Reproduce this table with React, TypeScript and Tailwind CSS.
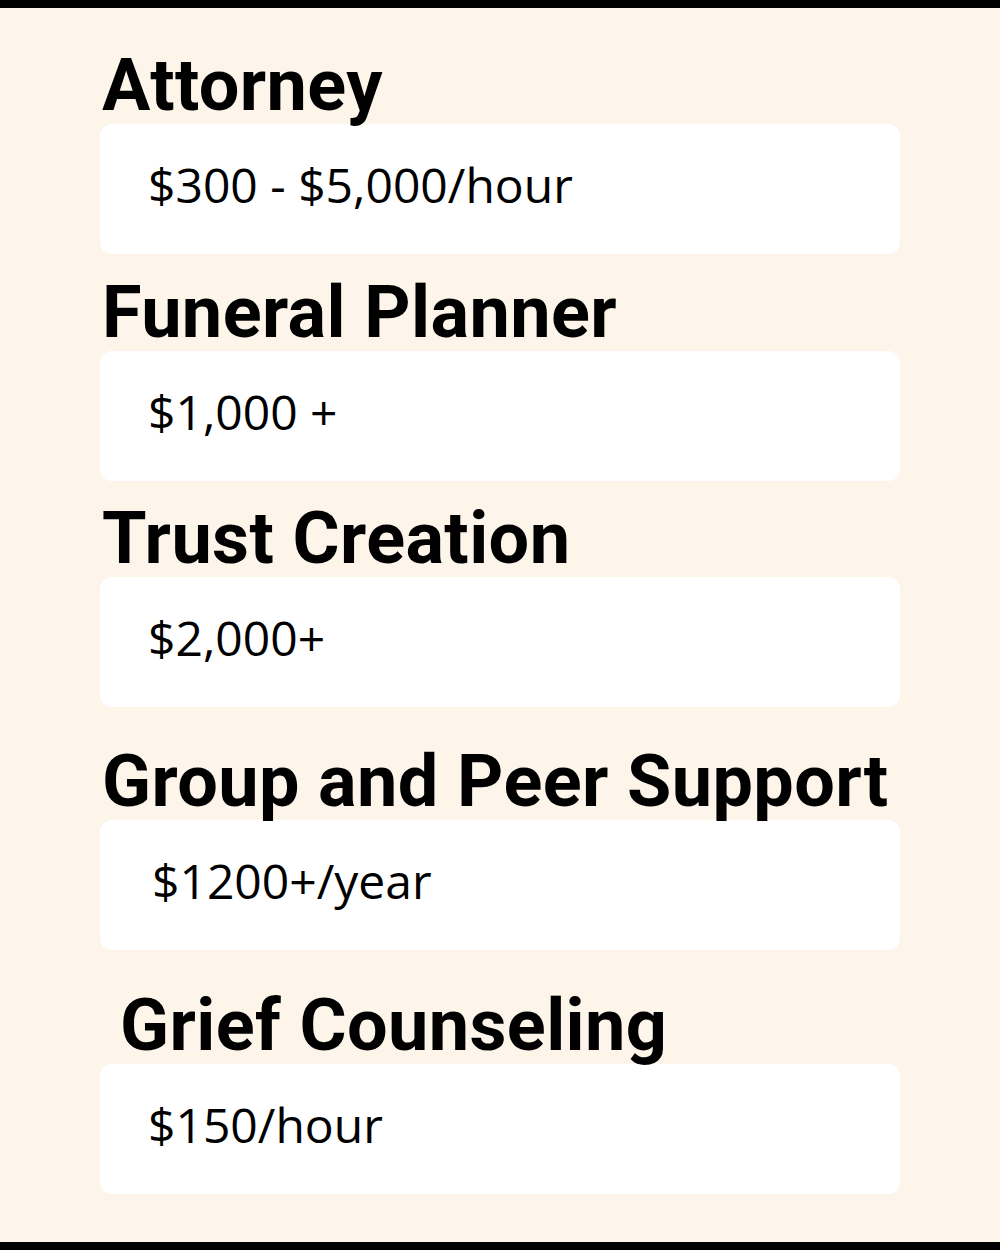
import React from 'react';

interface CostItem {
  title: string;
  price: string;
  gap: string;
  titleIndent?: string;
  priceIndent?: string;
}

const items: CostItem[] = [
  { title: 'Attorney', price: '$300 - $5,000/hour', gap: 'mt-[40px]' },
  { title: 'Funeral Planner', price: '$1,000 +', gap: 'mt-[21px]' },
  { title: 'Trust Creation', price: '$2,000+', gap: 'mt-[20px]' },
  { title: 'Group and Peer Support', price: '$1200+/year', gap: 'mt-[37px]', priceIndent: 'pl-[52px]' },
  { title: 'Grief Counseling', price: '$150/hour', gap: 'mt-[38px]', titleIndent: 'pl-[20px]' }
];

const CostCard: React.FC<{ item: CostItem }> = ({ item }) => (
  <div className={item.gap}>
    <h2
      className={`whitespace-nowrap text-[72px] leading-[76px] font-bold tracking-[0.4px] text-black pl-[2px] ${item.titleIndent ?? ''}`}
      style={{ fontFamily: 'Roboto, sans-serif' }}
    >
      {item.title}
    </h2>
    <div className="h-[130px] rounded-[12px] bg-white">
      <p
        className={`whitespace-nowrap pt-[37px] text-[48px] leading-[48px] text-black ${item.priceIndent ?? 'pl-[48px]'}`}
        style={{ fontFamily: '"Open Sans", sans-serif' }}
      >
        {item.price}
      </p>
    </div>
  </div>
);

export default function App() {
  return (
    <div className="w-[1000px] h-[1250px] bg-[#fdf5e9] border-y-8 border-black overflow-hidden">
      <div className="px-[100px]">
        {items.map(item => (
          <CostCard key={item.title} item={item} />
        ))}
      </div>
    </div>
  );
}
